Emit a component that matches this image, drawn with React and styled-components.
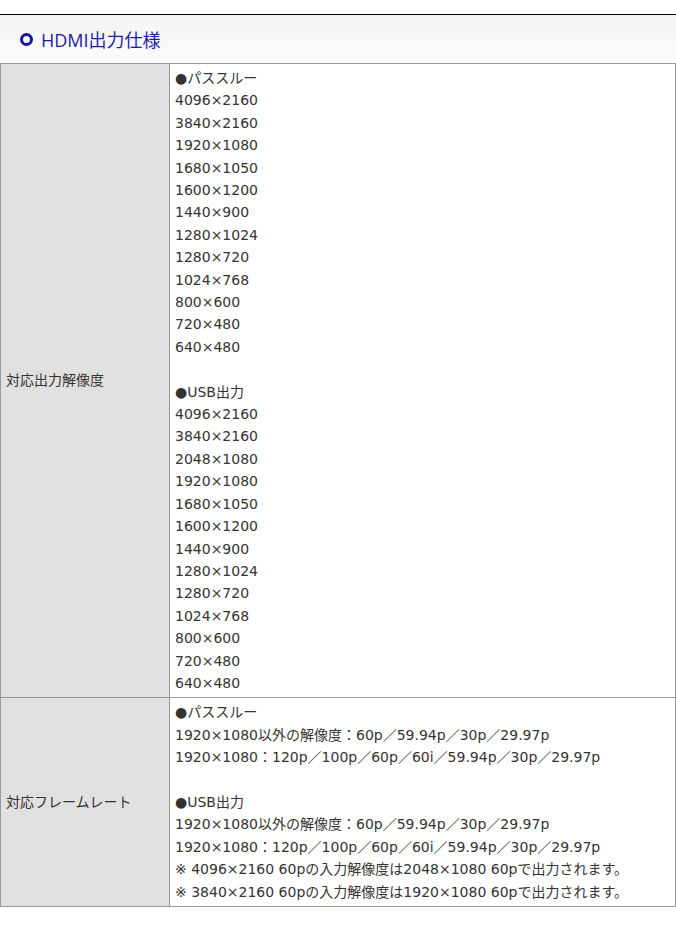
import React from "react";
import styled, { createGlobalStyle } from "styled-components";

const Global = createGlobalStyle`
  html, body { margin: 0; padding: 0; background: #fff; }
  body { font-family: "DejaVu Sans", "Noto Sans CJK JP", sans-serif; color: #333; }
`;

const Page = styled.div`
  padding-top: 14px;
  width: 676px;
`;

const Heading = styled.h3`
  margin: 0;
  height: 48px;
  border-top: 1px solid #000;
  background: linear-gradient(#f3f3f3, #fcfcfc);
  display: flex;
  align-items: center;
  padding-left: 20px;
  gap: 8px;
  font-weight: normal;
  font-size: 18px;
  color: #1c1ca8;
  font-family: "Open Sans", "Noto Sans CJK JP", sans-serif;
`;

const Ring = styled.span`
  width: 13px;
  height: 13px;
  border: 3.5px solid #14149e;
  border-radius: 50%;
  box-sizing: border-box;
  flex: none;
`;

const Table = styled.table`
  width: 676px;
  border-collapse: collapse;
  font-size: 14px;
  line-height: 22.4px;
  color: #333;
`;

const Th = styled.th`
  width: 158px;
  background: #e0e0e0;
  border: 1px solid #999;
  text-align: left;
  font-weight: normal;
  padding: 3px 5px;
  vertical-align: middle;
`;

const Td = styled.td`
  border: 1px solid #999;
  padding: 3px 5px;
  vertical-align: top;
`;

const Line = styled.div`
  min-height: 22.4px;
  white-space: nowrap;
  font-family: "DejaVu Sans", "Noto Sans CJK JP", sans-serif;
`;

const passRes = ["4096×2160","3840×2160","1920×1080","1680×1050","1600×1200","1440×900","1280×1024","1280×720","1024×768","800×600","720×480","640×480"];
const usbRes = ["4096×2160","3840×2160","2048×1080","1920×1080","1680×1050","1600×1200","1440×900","1280×1024","1280×720","1024×768","800×600","720×480","640×480"];

const rows = [
  {
    head: "対応出力解像度",
    lines: ["●パススルー", ...passRes, "", "●USB出力", ...usbRes],
  },
  {
    head: "対応フレームレート",
    lines: [
      "●パススルー",
      "1920×1080以外の解像度：60p／59.94p／30p／29.97p",
      "1920×1080：120p／100p／60p／60i／59.94p／30p／29.97p",
      "",
      "●USB出力",
      "1920×1080以外の解像度：60p／59.94p／30p／29.97p",
      "1920×1080：120p／100p／60p／60i／59.94p／30p／29.97p",
      "※ 4096×2160 60pの入力解像度は2048×1080 60pで出力されます。",
      "※ 3840×2160 60pの入力解像度は1920×1080 60pで出力されます。",
    ],
  },
];

export default function App() {
  return (
    <Page>
      <Global />
      <Heading>
        <Ring />
        HDMI出力仕様
      </Heading>
      <Table>
        <tbody>
          {rows.map((r) => (
            <tr key={r.head}>
              <Th>{r.head}</Th>
              <Td>
                {r.lines.map((l, i) => (
                  <Line key={i}>{l}</Line>
                ))}
              </Td>
            </tr>
          ))}
        </tbody>
      </Table>
    </Page>
  );
}
